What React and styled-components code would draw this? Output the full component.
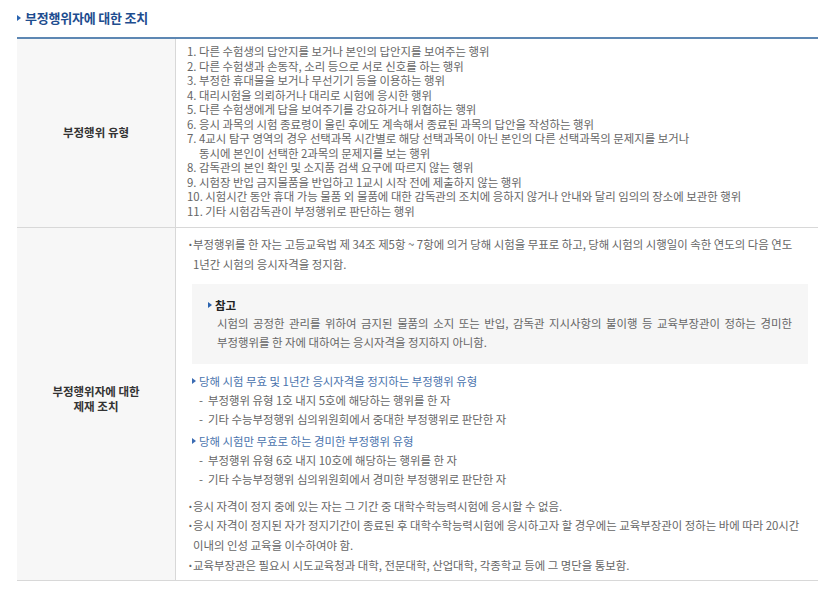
import React from 'react';
import styled, { createGlobalStyle } from 'styled-components';

const GlobalStyle = createGlobalStyle`
  body {
    margin: 0;
    background: #fff;
    font-family: "Noto Sans CJK KR", "Noto Sans", sans-serif;
  }
`;

const Page = styled.div`
  padding: 8px 18px 0 17px;
  width: 836px;
  box-sizing: border-box;
`;

const Title = styled.h3`
  margin: 0 0 10px 0;
  display: flex;
  align-items: center;
  gap: 4px;
  font-size: 13px;
  font-weight: 700;
  color: #1e4d8f;
  letter-spacing: -0.2px;
  height: 19px;
`;

const Marker = styled.span`
  width: 0;
  height: 0;
  border-top: ${p => p.size || 3}px solid transparent;
  border-bottom: ${p => p.size || 3}px solid transparent;
  border-left: ${p => (p.size || 3) + 1}px solid ${p => p.color || '#2a64b0'};
  flex-shrink: 0;
`;

const Table = styled.div`
  display: grid;
  grid-template-columns: 159px 1fr;
  border-top: 2px solid #5d87b3;
`;

const Head = styled.div`
  background: #f7f7f7;
  border-right: 1px solid #d8d8d8;
  border-bottom: 1px solid #d8d8d8;
  display: flex;
  align-items: center;
  justify-content: center;
  text-align: center;
  font-size: 11.5px;
  font-weight: 700;
  color: #333;
  line-height: 15px;
  padding-bottom: ${p => p.lift || '0'};
`;

const Cell = styled.div`
  border-bottom: 1px solid #d8d8d8;
  padding: ${p => p.pad || '5px 10px 8px 11px'};
  font-size: 11.4px;
  color: #666;
`;

const NumList = styled.ol`
  margin: 0;
  padding: 0;
  list-style: none;
  line-height: 14.55px;
`;

const NumItem = styled.li``;

const Cont = styled.span`
  display: block;
  padding-left: 12px;
`;

const Bullets = styled.ul`
  margin: ${p => p.m || '0'};
  padding: 0;
  list-style: none;
  line-height: ${p => p.lh || '19.7px'};
`;

const Bullet = styled.li`
  position: relative;
  padding-left: 6px;
  &::before {
    content: '·';
    position: absolute;
    left: 0;
    top: 0;
    font-weight: 700;
  }
`;

const Note = styled.div`
  background: #f6f6f6;
  margin: 9px 0 8px 5px;
  padding: 12px 16px 12px 16px;
`;

const NoteTitle = styled.div`
  display: flex;
  align-items: center;
  gap: 3px;
  font-size: 11.5px;
  font-weight: 700;
  color: #222;
  line-height: 18px;
`;

const NoteLine = styled.span`
  display: block;
  margin-left: 9px;
  line-height: 19px;
  text-align: ${p => (p.spread ? 'justify' : 'left')};
  text-align-last: ${p => (p.spread ? 'justify' : 'auto')};
`;

const Group = styled.div`
  margin: 0 0 3px 5px;
  line-height: 19px;
`;

const GroupHead = styled.div`
  display: flex;
  align-items: center;
  gap: 3px;
  color: #4a73ad;
`;

const Dash = styled.div`
  display: flex;
  gap: 5px;
  padding-left: 7px;
`;

const punish = [
  '다른 수험생의 답안지를 보거나 본인의 답안지를 보여주는 행위',
  '다른 수험생과 손동작, 소리 등으로 서로 신호를 하는 행위',
  '부정한 휴대물을 보거나 무선기기 등을 이용하는 행위',
  '대리시험을 의뢰하거나 대리로 시험에 응시한 행위',
  '다른 수험생에게 답을 보여주기를 강요하거나 위협하는 행위',
  '응시 과목의 시험 종료령이 울린 후에도 계속해서 종료된 과목의 답안을 작성하는 행위',
  ['4교시 탐구 영역의 경우 선택과목 시간별로 해당 선택과목이 아닌 본인의 다른 선택과목의 문제지를 보거나', '동시에 본인이 선택한 2과목의 문제지를 보는 행위'],
  '감독관의 본인 확인 및 소지품 검색 요구에 따르지 않는 행위',
  '시험장 반입 금지물품을 반입하고 1교시 시작 전에 제출하지 않는 행위',
  '시험시간 동안 휴대 가능 물품 외 물품에 대한 감독관의 조치에 응하지 않거나 안내와 달리 임의의 장소에 보관한 행위',
  '기타 시험감독관이 부정행위로 판단하는 행위',
];

const groups = [
  {
    head: '당해 시험 무효 및 1년간 응시자격을 정지하는 부정행위 유형',
    items: ['부정행위 유형 1호 내지 5호에 해당하는 행위를 한 자', '기타 수능부정행위 심의위원회에서 중대한 부정행위로 판단한 자'],
  },
  {
    head: '당해 시험만 무효로 하는 경미한 부정행위 유형',
    items: ['부정행위 유형 6호 내지 10호에 해당하는 행위를 한 자', '기타 수능부정행위 심의위원회에서 경미한 부정행위로 판단한 자'],
  },
];

export default function App() {
  return (
    <>
      <GlobalStyle />
      <Page>
        <Title>
          <Marker size={3} color="#2a64b0" />
          부정행위자에 대한 조치
        </Title>
        <Table>
          <Head>부정행위 유형</Head>
          <Cell>
            <NumList>
              {punish.map((t, i) => (
                <NumItem key={i}>
                  {Array.isArray(t) ? (
                    <>
                      {i + 1}. {t[0]}
                      <Cont>{t[1]}</Cont>
                    </>
                  ) : (
                    `${i + 1}. ${t}`
                  )}
                </NumItem>
              ))}
            </NumList>
          </Cell>

          <Head lift="10px">
            부정행위자에 대한
            <br />
            제재 조치
          </Head>
          <Cell pad="6px 10px 5px 11px">
            <Bullets lh="20.5px">
              <Bullet>
                부정행위를 한 자는 고등교육법 제 34조 제5항 ~ 7항에 의거 당해 시험을 무표로 하고, 당해 시험의 시행일이 속한 연도의 다음 연도
                <br />
                1년간 시험의 응시자격을 정지함.
              </Bullet>
            </Bullets>
            <Note>
              <NoteTitle>
                <Marker size={3} color="#2a64b0" />
                참고
              </NoteTitle>
              <NoteLine spread>
                시험의 공정한 관리를 위하여 금지된 물품의 소지 또는 반입, 감독관 지시사항의 불이행 등 교육부장관이 정하는 경미한
              </NoteLine>
              <NoteLine>부정행위를 한 자에 대하여는 응시자격을 정지하지 아니함.</NoteLine>
            </Note>
            {groups.map(g => (
              <Group key={g.head}>
                <GroupHead>
                  <Marker size={3} color="#3b6bb3" />
                  {g.head}
                </GroupHead>
                {g.items.map(it => (
                  <Dash key={it}>
                    <span>-</span>
                    <span>{it}</span>
                  </Dash>
                ))}
              </Group>
            ))}
            <Bullets m="8px 0 0 0">
              <Bullet>응시 자격이 정지 중에 있는 자는 그 기간 중 대학수학능력시험에 응시할 수 없음.</Bullet>
              <Bullet>
                응시 자격이 정지된 자가 정지기간이 종료된 후 대학수학능력시험에 응시하고자 할 경우에는 교육부장관이 정하는 바에 따라 20시간
                <br />
                이내의 인성 교육을 이수하여야 함.
              </Bullet>
              <Bullet>교육부장관은 필요시 시도교육청과 대학, 전문대학, 산업대학, 각종학교 등에 그 명단을 통보함.</Bullet>
            </Bullets>
          </Cell>
        </Table>
      </Page>
    </>
  );
}
